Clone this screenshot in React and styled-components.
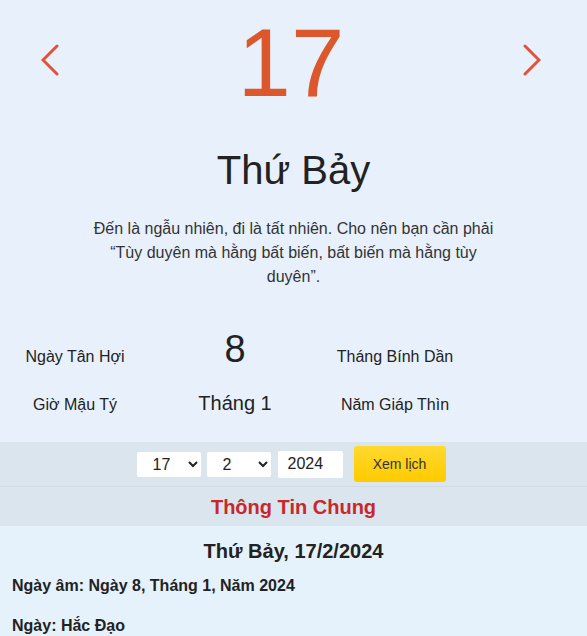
import React, { useState } from "react";
import styled, { createGlobalStyle } from "styled-components";

const GlobalStyle = createGlobalStyle`
  body {
    margin: 0;
    background: #e5f2fc;
    font-family: "Liberation Sans", Arial, sans-serif;
    color: #222;
  }
`;

const Page = styled.div`
  width: 587px;
`;

const Hero = styled.div`
  background: #e8f1fb;
  padding: 8px 0 25px;
`;

const DayRow = styled.div`
  display: grid;
  grid-template-columns: 1fr auto 1fr;
  align-items: center;
  padding: 0 46px 0 41px;
`;

const NavButton = styled.button`
  justify-self: ${(p) => (p.$side === "left" ? "start" : "end")};
  background: none;
  border: 0;
  padding: 0;
  margin-bottom: 6px;
  cursor: pointer;
  display: flex;
`;

const BigDay = styled.div`
  font-size: 96px;
  line-height: 110px;
  color: #dc582c;
`;

const Weekday = styled.h1`
  margin: 29px 0 0;
  font-size: 40px;
  line-height: 46px;
  font-weight: normal;
  text-align: center;
  color: #222;
`;

const Quote = styled.p`
  width: 410px;
  margin: 24px auto 0;
  font-size: 16px;
  line-height: 24px;
  text-align: center;
  color: #333;
`;

const LunarGrid = styled.div`
  display: grid;
  grid-template-columns: 150px 170px 150px;
  row-gap: 20px;
  margin-top: 38px;
  align-items: baseline;
`;

const Cell = styled.div`
  text-align: center;
  font-size: ${(p) => p.$size || 16}px;
  line-height: ${(p) => (p.$size === 38 ? 44 : 24)}px;
  color: #222;
`;

const FilterBar = styled.form`
  display: flex;
  justify-content: center;
  align-items: center;
  gap: 6px;
  padding: 4px 5px 4px 0;
  background: #dbe5ee;
  border-bottom: 1px solid #d2dce6;
`;

const Select = styled.select`
  width: 64px;
  height: 25px;
  border: 0;
  border-radius: 2px;
  background: #fff;
  font-family: "Liberation Sans", Arial, sans-serif;
  font-size: 16px;
  color: #222;
  padding: 0 4px 0 12px;
`;

const YearInput = styled.input`
  width: 65px;
  height: 27px;
  box-sizing: border-box;
  border: 0;
  border-radius: 2px;
  background: #fff;
  font-family: "Liberation Sans", Arial, sans-serif;
  font-size: 16px;
  color: #222;
  padding: 0 10px;
  margin-left: 1px;
`;

const SubmitButton = styled.button`
  width: 92px;
  height: 36px;
  margin-left: 5px;
  border: 0;
  border-radius: 3px;
  background: linear-gradient(#ffd92e, #ffcb00);
  font-family: "Liberation Sans", Arial, sans-serif;
  font-size: 14px;
  color: #333;
  cursor: pointer;
`;

const SectionHeader = styled.h2`
  margin: 0;
  padding: 8px 0 7px;
  background: #dbe5ee;
  font-size: 20px;
  line-height: 24px;
  text-align: center;
  color: #c8282a;
`;

const Content = styled.div`
  padding: 0 12px;
`;

const DateTitle = styled.h3`
  margin: 13px 0 11px;
  font-size: 20px;
  line-height: 24px;
  text-align: center;
  color: #222;
`;

const InfoLine = styled.p`
  margin: 0 0 16px;
  font-size: 16px;
  line-height: 24px;
  font-weight: bold;
  color: #222;
`;

function Chevron({ dir }) {
  const d = dir === "left" ? "M16 2 L2 16 L16 30" : "M2 2 L16 16 L2 30";
  return (
    <svg width="18" height="32" viewBox="0 0 18 32">
      <path d={d} fill="none" stroke="#e4513b" strokeWidth="3" strokeLinecap="round" strokeLinejoin="miter" />
    </svg>
  );
}

export default function App() {
  const [day, setDay] = useState("17");
  const [month, setMonth] = useState("2");
  const [year, setYear] = useState("2024");

  return (
    <Page>
      <GlobalStyle />
      <Hero>
        <DayRow>
          <NavButton $side="left" aria-label="Ngày trước">
            <Chevron dir="left" />
          </NavButton>
          <BigDay>17</BigDay>
          <NavButton $side="right" aria-label="Ngày sau">
            <Chevron dir="right" />
          </NavButton>
        </DayRow>
        <Weekday>Thứ Bảy</Weekday>
        <Quote>
          Đến là ngẫu nhiên, đi là tất nhiên. Cho nên bạn cần phải “Tùy duyên mà hằng bất biến, bất biến mà hằng tùy duyên”.
        </Quote>
        <LunarGrid>
          <Cell>Ngày Tân Hợi</Cell>
          <Cell $size={38}>8</Cell>
          <Cell>Tháng Bính Dần</Cell>
          <Cell>Giờ Mậu Tý</Cell>
          <Cell $size={20}>Tháng 1</Cell>
          <Cell>Năm Giáp Thìn</Cell>
        </LunarGrid>
      </Hero>

      <FilterBar onSubmit={(e) => e.preventDefault()}>
        <Select value={day} onChange={(e) => setDay(e.target.value)}>
          {Array.from({ length: 31 }, (_, i) => (
            <option key={i} value={String(i + 1)}>{i + 1}</option>
          ))}
        </Select>
        <Select value={month} onChange={(e) => setMonth(e.target.value)}>
          {Array.from({ length: 12 }, (_, i) => (
            <option key={i} value={String(i + 1)}>{i + 1}</option>
          ))}
        </Select>
        <YearInput value={year} onChange={(e) => setYear(e.target.value)} />
        <SubmitButton type="submit">Xem lịch</SubmitButton>
      </FilterBar>

      <SectionHeader>Thông Tin Chung</SectionHeader>
      <Content>
        <DateTitle>Thứ Bảy, 17/2/2024</DateTitle>
        <InfoLine>Ngày âm: Ngày 8, Tháng 1, Năm 2024</InfoLine>
        <InfoLine>Ngày: Hắc Đạo</InfoLine>
      </Content>
    </Page>
  );
}
